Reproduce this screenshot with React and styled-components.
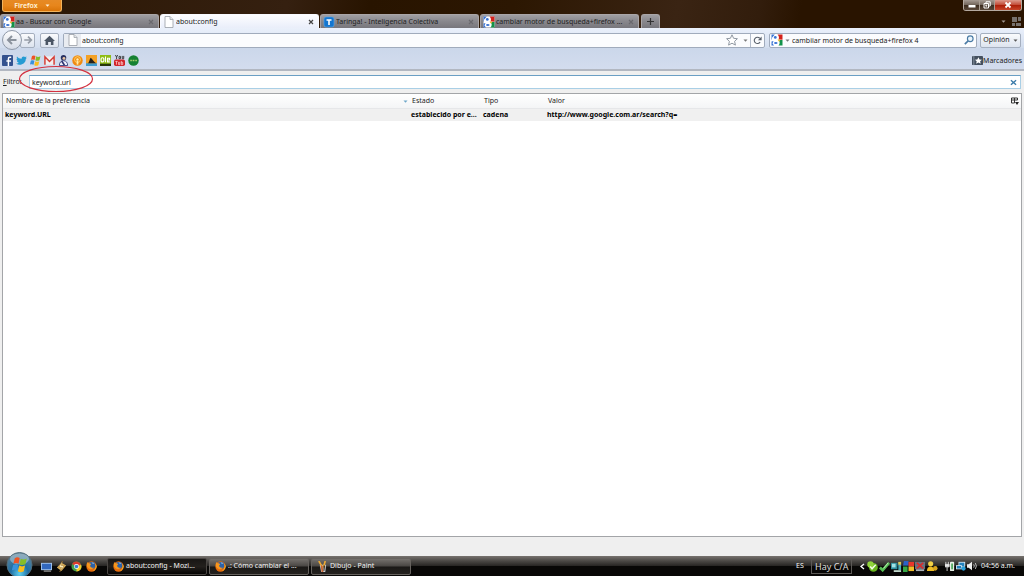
import React from 'react';
import styled, { createGlobalStyle, css } from 'styled-components';

const Global = createGlobalStyle`
  * { box-sizing: border-box; }
  body { margin: 0; font: 7px/10px "Noto Sans", "Open Sans", sans-serif; color: #222; }
  button, input { font: inherit; color: inherit; margin: 0; padding: 0; border: 0; background: none; }
  input { outline: 0; }
  svg { display: block; flex: none; }
`;

const Desktop = styled.div`
  min-height: 100vh;
  display: flex;
  flex-direction: column;
  background: #efefef;
`;

/* ---------- window frame ---------- */
const Frame = styled.header`
  background: linear-gradient(100deg, #2b1704 0%, #352010 28%, #281400 36%, #2c1702 50%, #3a2413 66%, #321d0c 74%, #291400 78%, #291400 100%);
`;
const TitleBar = styled.div`
  height: 14px;
  padding: 0 2px;
  display: flex;
  justify-content: space-between;
  align-items: flex-start;
`;
const FirefoxButton = styled.button`
  width: 60px;
  height: 12px;
  display: flex;
  align-items: center;
  justify-content: center;
  gap: 7px;
  color: #fff4dc;
  font-weight: 600;
  background: linear-gradient(#e68a25, #e7861c 50%, #d97408);
  border: 1px solid #f3b45c;
  border-top: 0;
  border-radius: 0 0 3px 3px;
`;
const WindowControls = styled.div`
  display: flex;
  height: 11px;
  border: 1px solid #b5aaa1;
  border-top: 0;
  border-radius: 0 0 3px 3px;
  overflow: hidden;
`;
const ControlButton = styled.button`
  width: ${(p) => (p.$close ? 27 : 15)}px;
  display: flex;
  align-items: center;
  justify-content: center;
  border-left: ${(p) => (p.$first ? 0 : 1)}px solid #a89d93;
  background: ${(p) => (p.$close
    ? 'linear-gradient(#dc9a8c, #c4503c 45%, #a91c06 50%, #c8452a)'
    : 'linear-gradient(#a59a92, #75695f 45%, #3a2a1d 50%, #5a493b)')};
`;
const TabStrip = styled.nav`
  height: 14px;
  display: flex;
`;
const tabLook = css`
  background: ${(p) => (p.$active ? 'linear-gradient(#fdfdff, #e9eefa)' : 'linear-gradient(#a09fa3, #8a898e 45%, #77767c)')};
  border: 1px solid ${(p) => (p.$active ? '#f8faff' : '#aaa6a8')};
  border-bottom: 0;
  border-radius: 3px 3px 0 0;
`;
const Tab = styled.div`
  ${tabLook}
  flex: 0 1 159px;
  min-width: 0;
  margin-right: 1px;
  padding: 0 4px 0 2px;
  display: flex;
  align-items: center;
  gap: 1px;
`;
const TabTitle = styled.button`
  flex: 1;
  min-width: 0;
  text-align: left;
  white-space: nowrap;
  overflow: hidden;
  text-overflow: ellipsis;
`;
const PlainButton = styled.button`
  display: flex;
  align-items: center;
  justify-content: center;
`;
const NewTab = styled.button`
  ${tabLook}
  width: 19px;
  margin-left: 1px;
  display: flex;
  align-items: center;
  justify-content: center;
`;
const StripTools = styled.div`
  margin-left: auto;
  padding-right: 3px;
  display: flex;
  align-items: center;
  gap: 6px;
`;

/* ---------- toolbars ---------- */
const NavBar = styled.div`
  height: 20px;
  padding: 4px 3px 0 2px;
  display: flex;
  align-items: center;
  background: linear-gradient(#eaf0fb, #d2ddee);
`;
const BackButton = styled.button`
  width: 20px;
  height: 20px;
  flex: none;
  display: flex;
  align-items: center;
  justify-content: center;
  border: 1px solid #8f99a8;
  border-radius: 50%;
  background: linear-gradient(#fdfdfe, #d6dce7);
  z-index: 1;
`;
const ToolButton = styled.button`
  width: ${(p) => p.$width}px;
  height: 15px;
  margin-left: ${(p) => p.$gap}px;
  flex: none;
  display: flex;
  align-items: center;
  justify-content: center;
  gap: 3px;
  border: 1px solid #a5afbf;
  border-radius: 2px;
  background: linear-gradient(#fafbfd, #dde4ef);
`;
const Field = styled.div`
  height: 15px;
  min-width: 0;
  margin-left: ${(p) => p.$gap}px;
  flex: ${(p) => (p.$width ? `0 1 ${p.$width}px` : '1')};
  display: flex;
  align-items: center;
  border: 1px solid #a0abbc;
  border-radius: 2px;
  background: #fbfcfe;
  input { flex: 1; min-width: 0; height: 11px; padding-left: 1px; }
`;
const PageBox = styled.span`
  width: 17px;
  align-self: stretch;
  display: flex;
  align-items: center;
  justify-content: center;
  background: #e9ecf1;
`;
const ReloadButton = styled.button`
  width: 14px;
  align-self: stretch;
  display: flex;
  align-items: center;
  justify-content: center;
  border-left: 1px solid #b3bccb;
`;
const FieldIcon = styled.button`
  width: ${(p) => p.$width}px;
  display: flex;
  align-items: center;
  justify-content: center;
  gap: 2px;
`;
const Bookmarks = styled.div`
  height: 23px;
  padding: 4px 2px 0;
  display: flex;
  align-items: center;
  background: linear-gradient(#cbd7ea, #d3dcee);
  border-bottom: 2px solid #b2b7c1;
`;
const Bookmark = styled.a`
  width: 14px;
  flex: none;
  color: inherit;
  text-decoration: none;
`;
const BookmarksMenu = styled.button`
  margin-left: auto;
  display: flex;
  align-items: center;
`;

/* ---------- page ---------- */
const FilterBar = styled.div`
  position: relative;
  height: 22px;
  padding: 0 3px;
  display: flex;
  align-items: center;
`;
const FilterLabel = styled.label`
  width: 26px;
  flex: none;
`;
const FilterField = styled.div`
  flex: 1;
  height: 14px;
  display: flex;
  align-items: center;
  padding: 0 3px 0 2px;
  background: #fff;
  border: 1px solid #a9cfe6;
  border-top-color: #6b9fc4;
  input { flex: 1; min-width: 0; height: 12px; }
`;
const Marker = styled.svg`
  position: absolute;
  left: 18px;
  top: -6px;
  pointer-events: none;
`;
const Tree = styled.main`
  flex: 1;
  margin: 0 2px 19px;
  background: #fff;
  border: 1px solid #a3a5a8;
`;
const PrefTable = styled.table`
  width: 100%;
  table-layout: fixed;
  border-collapse: collapse;
  th, td { padding: 1px 0 0 3px; text-align: left; white-space: nowrap; overflow: hidden; text-overflow: ellipsis; }
  th { height: 14px; font-weight: 400; background: linear-gradient(#fff, #f4f5f6); border-bottom: 1px solid #e6e7e9; }
  td { height: 13px; padding-left: 2px; font-weight: 700; color: #000; background: #f0f0f0; }
`;
const Col = styled.col`
  width: ${(p) => (p.$width ? `${p.$width}px` : 'auto')};
`;
const HeadCell = styled.div`
  display: flex;
  align-items: center;
  justify-content: space-between;
  padding-right: 1px;
`;

/* ---------- taskbar ---------- */
const Taskbar = styled.footer`
  height: 20px;
  padding: 0 9px 0 6px;
  display: flex;
  align-items: center;
  color: #f2f2f2;
  background: linear-gradient(#77736f 0, #4b4845 25%, #292725 48%, #080706 52%, #080706 100%);
`;
const StartButton = styled.button`
  width: 28px;
  height: 24px;
  align-self: flex-end;
  flex: none;
`;
const QuickLaunch = styled.div`
  width: 73px;
  padding-left: 7px;
  flex: none;
  display: flex;
  gap: 4px;
`;
const Task = styled.button`
  flex: 0 1 100px;
  min-width: 0;
  height: 17px;
  margin-right: 2px;
  padding: 0 5px;
  display: flex;
  align-items: center;
  gap: 2px;
  white-space: nowrap;
  border: 1px solid ${(p) => (p.$active ? '#4a4643' : '#66625e')};
  border-radius: 2px;
  background: ${(p) => (p.$active
    ? 'linear-gradient(#181614, #23201d 50%, #050403)'
    : 'linear-gradient(#75716d, #494643 48%, #1a1816 52%, #25221f)')};
`;
const Tray = styled.div`
  margin-left: auto;
  display: flex;
  align-items: center;
`;
const Language = styled.span`
  width: 15px;
`;
const Power = styled.span`
  width: 41px;
  height: 15px;
  padding-left: 3px;
  font-size: 9px;
  line-height: 14px;
  white-space: nowrap;
  border: 1px solid #5c5956;
  color: #ddd;
`;
const TrayIcons = styled.div`
  margin-left: ${(p) => p.$gap}px;
  display: flex;
  gap: 1px;
`;
const Clock = styled.time`
  width: 34px;
  margin-left: 4px;
  white-space: nowrap;
`;

/* ---------- drawings ---------- */
const Svg = ({ s = 10, box = 12, children, ...rest }) => (
  <svg width={s} height={s} viewBox={`0 0 ${box} ${box}`} aria-hidden="true" {...rest}>{children}</svg>
);
const Arrow = ({ color = '#555' }) => (
  <svg width="5" height="3" viewBox="0 0 5 3" aria-hidden="true"><path d="M.5.5h4L2.500 2.700z" fill={color} /></svg>
);
const GoogleIcon = () => (
  <Svg s={12}>
    <rect x=".5" y=".5" width="11" height="11" rx="1" fill="#fff" />
    <path d="M.5.500h3.300L1 3.800v1.700H.5z" fill="#3a74d4" />
    <path d="M6.500.5h5v5.300L7.500 5.500C8.300 4 8.200 2 6.500.5z" fill="#d3221c" />
    <path d="M7.500 6h4v5.500h-4c1.600-1.500 1.600-3.700 0-5.500z" fill="#12924a" />
    <path d="M.5 7.500L2.500 7 1.500 9.500 3 11.500H.5z" fill="#3a74d4" />
    <circle cx="4.300" cy="3.400" r="1.400" fill="#3a74d4" />
    <ellipse cx="4.800" cy="9" rx="1.800" ry="1.100" fill="#3a74d4" />
    <path d="M6.500 5.500l3 .2-1.500 2z" fill="#f0c030" />
  </Svg>
);
const PageIcon = () => (
  <Svg s={12}><path d="M2 .5h5l3 3v8H2z" fill="#fff" stroke="#979ca3" strokeWidth=".8" /><path d="M7 .5v3h3" fill="#e4e6e9" stroke="#979ca3" strokeWidth=".7" /></Svg>
);
const TaringaIcon = () => (
  <Svg s={12}><rect x="1" y="1" width="10" height="10" rx="2" fill="#1476cf" stroke="#5aa9eb" strokeWidth=".6" /><path d="M3.500 4h5M6 4v5" stroke="#fff" strokeWidth="1.600" /></Svg>
);
const CloseIcon = ({ color }) => (
  <Svg s={6} box={6}><path d="M1 1l4 4M5 1L1 5" stroke={color} strokeWidth="1.200" /></Svg>
);
const FirefoxIcon = () => (
  <Svg s={11}>
    <circle cx="6" cy="6" r="5.600" fill="#e56b0b" /><circle cx="6.300" cy="5" r="3.800" fill="#2d62a8" />
    <path d="M6 1.400c2 0 3 1 3.500 2-1-.4-1.500-.3-2-.2z" fill="#86bce6" />
    <path d="M.8 3l1.100-2 .9 1.500c1.500-.2 2.200.4 2.800 1L4.500 5c0 2 2 3 4 2-.5 1.500-3 2.500-5 1.500C1 7.500.5 5 .8 3z" fill="#f7961d" />
    <path d="M10 3c1.500 3 .3 6.500-2.500 7.800 2-.2 4-2 4.100-4.800C11.600 5 11 3.800 10 3z" fill="#fbc12d" />
  </Svg>
);
const Flag = ({ x = 0, y = 0, k = 1 }) => (
  <g transform={`translate(${x} ${y}) scale(${k})`}>
    <path d="M2.500 1.500c1.300-.9 2.300-.7 3.300-.1L5 5.200c-1-.6-2-.7-3.400 0z" fill="#ef5323" />
    <path d="M6.500 1.800c1.200.7 2.500.7 4-.1l-.9 3.800c-1.400.7-2.700.8-3.900 0z" fill="#86bd26" />
    <path d="M1.400 6c1.300-.7 2.400-.6 3.400 0L4 9.700c-1-.6-2-.7-3.500 0z" fill="#3a92db" />
    <path d="M5.500 6.400c1.200.7 2.500.7 3.900 0l-.9 3.800c-1.400.8-2.700.8-3.900 0z" fill="#fbbd1c" />
  </g>
);

const bookmarks = [
  ['Facebook', <><rect width="12" height="12" rx="1" fill="#34528f" /><path d="M10 2.500H8.500Q7 2.500 7 4v8M4.800 6.500h5" stroke="#fff" strokeWidth="1.600" fill="none" /></>],
  ['Twitter', <path d="M0 9.300c2 0 2.500-.4 3-.9C1.600 8 1.300 7.400 1 6.600h1.200C.8 6 .6 5 .6 4l1 .4C.7 3.500.7 2.500 1.100 1.600c1.300 1.600 2.900 2.300 5 2.500C6 1.600 8.500.9 9.900 2.300l1.700-.6-1 1.500 1.300-.3-1.200 1.400C10.600 9.700 4.500 12.300 0 9.300z" fill="#259bd3" />],
  ['Windows', <Flag x={-0.7} y={-0.6} k={1.15} />],
  ['Gmail', <><rect y="1.500" width="12" height="9" fill="#f4eeee" /><path d="M1 10.500V2l5 5 5-5v8.500" fill="none" stroke="#d33a34" strokeWidth="1.600" /></>],
  ['Perfil', <><circle cx="6" cy="3" r="3" fill="#273061" /><circle cx="6.500" cy="3.700" r="1.600" fill="#e9c4a2" /><path d="M1.500 11.500c0-3 1.500-5.300 4.500-5.300s4.500 2.300 4.500 5.300z" fill="#eff1fa" stroke="#353e7c" /><path d="M4 6.500l3 4.500" stroke="#2c3170" strokeWidth="1.800" /></>],
  ['Podcast', <><circle cx="6" cy="6" r="5.700" fill="#f08a12" /><circle cx="6" cy="5" r="3.200" fill="none" stroke="#ffd467" /><circle cx="6" cy="4.800" r="1.300" fill="#ffeeb0" /><path d="M6 6v4.500" stroke="#ffe9a7" strokeWidth="1.800" /></>],
  ['Fotos', <><rect width="12" height="12" fill="#f3a126" /><path d="M0 9h12v3H0z" fill="#3e9bd0" /><path d="M2 9c2-1 1.500-4 3-6 2 1 3 4 6 6z" fill="#26201a" /></>],
  ['Olé', <><rect width="12" height="12" fill="#8fbd13" /><path d="M0 9.500h12V12H0z" fill="#27370a" /><rect x="1.200" y="3" width="3" height="4.500" rx="1.300" fill="none" stroke="#fff" strokeWidth="1.300" /><path d="M6 1.500v6.500M8 5.500h2.500V3.500H8.200v4h2.500" fill="none" stroke="#fff" strokeWidth="1.200" /></>],
  ['YouTube', <><path d="M1.500 0l1.300 2.300L4 0M2.800 2.300v2.200" stroke="#333" fill="none" /><path d="M5.500 1.500h1.600v2.500H5.500zM9 1v3h1.600V1" stroke="#333" fill="none" /><rect y="5" width="12" height="7" rx="1.800" fill="#d3252a" /><path d="M1.500 7h2.500M2.700 7v3.500M5 7.500v3h1.300v-3M8 6.500v4h1.500V8H8" stroke="#ffd5d5" fill="none" strokeWidth=".8" /></>],
  ['Enlace verde', <><circle cx="6" cy="6" r="5.700" fill="#168132" /><path d="M2.500 6h1.700M5 6h2M8 6h1.700" stroke="#a9cf6a" strokeWidth="1.800" /></>],
];

const tabs = [
  { title: 'aa - Buscar con Google', icon: <GoogleIcon /> },
  { title: 'about:config', icon: <PageIcon />, active: true },
  { title: 'Taringa! - Inteligencia Colectiva', icon: <TaringaIcon /> },
  { title: 'cambiar motor de busqueda+firefox ...', icon: <GoogleIcon /> },
];

const trayIcons = [
  <><circle cx="7" cy="7" r="4.800" fill="#68b51e" /><circle cx="3.800" cy="3.800" r="3.500" fill="#91d43b" /><path d="M3.500 6l2 2.500 4-4.500" stroke="#f5ffe6" fill="none" strokeWidth="1.600" /></>,
  <><path d="M1 7l3 3 7-8" stroke="#57bd55" strokeWidth="3" fill="none" /><path d="M5 8l5-6" stroke="#c5f2bc" /></>,
  <><rect y="2" width="7" height="7" fill="#2d8d9d" /><rect x="1" y="3" width="4" height="4" fill="#a4e1e4" /><path d="M8 1h3v9H8z" fill="#4dacb4" /><path d="M3 10h8v2H3z" fill="#bfd6cb" /><path d="M8 1h3v3H8z" fill="#e8c94d" /></>,
  <><path d="M1 0h5v5H0z" fill="#2b62c7" /><path d="M6 1h6v5H6z" fill="#e8372b" /><path d="M0 6h5v6H0z" fill="#35a845" /><path d="M6 6h6v5H6z" fill="#f0bd28" /></>,
  <><rect y="1" width="11" height="8" fill="#69717e" /><path d="M1 10h9" stroke="#aab0b8" strokeWidth="2" /><path d="M2 2l7 6M9 2L2 8" stroke="#d62d2d" strokeWidth="2" /></>,
  <><circle cx="4" cy="3" r="2.800" fill="#f2d145" /><path d="M0 11c0-4 2-5 4-5s4 2 4 5z" fill="#eebd25" /><circle cx="9" cy="8" r="2.500" fill="#d7a41d" /></>,
];
const systemIcons = [
  <><rect x="6" y="1" width="5" height="11" rx="1" fill="#e7efe6" /><rect x="7.500" y="3" width="2" height="7" fill="#4aa65a" /><path d="M1 1v3M4 1v3M0 4h5v3H0zM2.500 7v5" stroke="#e8e8e8" fill="#e8e8e8" /></>,
  <><rect x="3" y="1" width="8" height="6" fill="#dceaf3" /><rect x="4" y="2" width="6" height="4" fill="#2582bd" /><rect y="5" width="7" height="5" fill="#d5e7f1" /><rect x="1" y="6" width="5" height="3" fill="#247db7" /><circle cx="9" cy="9" r="2.600" fill="#2aa0db" /></>,
  <><path d="M0 4h2l4-3v10L2 8H0z" fill="#eee" /><path d="M8 4q1.500 2 0 4M10 2.500q2.500 3.500 0 7" fill="none" stroke="#ddd" /></>,
];

export default function App() {
  return (
    <Desktop>
      <Global />
      <Frame>
        <TitleBar>
          <FirefoxButton>Firefox <Arrow color="#fff4dc" /></FirefoxButton>
          <WindowControls>
            <ControlButton $first aria-label="Minimizar"><Svg s={8} box={8}><rect x="0.500" y="4" width="7" height="2.500" fill="#fff" /></Svg></ControlButton>
            <ControlButton aria-label="Restaurar"><Svg s={8} box={8}><path d="M3 2V.8h4.200V5H6M1 2.500h4.500V7H1zM2.800 4.200h1v1h-1z" fill="none" stroke="#fff" /></Svg></ControlButton>
            <ControlButton $close aria-label="Cerrar"><Svg s={8} box={8}><path d="M1.500 1.500l5 5M6.500 1.500l-5 5" stroke="#fff" strokeWidth="1.800" /></Svg></ControlButton>
          </WindowControls>
        </TitleBar>
        <TabStrip aria-label="Pestañas">
          {tabs.map((t) => (
            <Tab key={t.title} $active={t.active}>
              {t.icon}
              <TabTitle>{t.title}</TabTitle>
              <PlainButton aria-label="Cerrar pestaña"><CloseIcon color={t.active ? '#444' : '#6a696e'} /></PlainButton>
            </Tab>
          ))}
          <NewTab aria-label="Nueva pestaña"><Svg s={7} box={7}><path d="M3.500 0v7M0 3.500h7" stroke="#333" strokeWidth="1.200" /></Svg></NewTab>
          <StripTools>
            <PlainButton aria-label="Listar pestañas"><Arrow color="#a39a93" /></PlainButton>
            <PlainButton aria-label="Agrupar pestañas">
              <Svg s={9} box={9}><path d="M0 0h5v5H0zM6 0h3v4H6zM0 6h3v3H0zM4 6h5v3H4z" fill="#77716d" /></Svg>
            </PlainButton>
          </StripTools>
        </TabStrip>
      </Frame>

      <NavBar>
        <BackButton aria-label="Atrás"><Svg s={12}><path d="M6 2L2 6l4 4M2.500 6h8" fill="none" stroke="#8b929c" strokeWidth="2" /></Svg></BackButton>
        <ToolButton $width={15} $gap={-2} aria-label="Adelante"><Svg s={10}><path d="M6 2l4 4-4 4M9.500 6h-8" fill="none" stroke="#959ca7" strokeWidth="2" /></Svg></ToolButton>
        <ToolButton $width={19} $gap={5} aria-label="Inicio"><Svg s={11}><path d="M0 6.500L6 .8l6 5.700h-1.700V11H7.500V7.500h-3V11H1.700V6.500z" fill="#4a5564" /></Svg></ToolButton>
        <Field $gap={4}>
          <PageBox><PageIcon /></PageBox>
          <input aria-label="Dirección" defaultValue="about:config" />
          <FieldIcon $width={19} aria-label="Añadir a marcadores"><Svg s={12}><path d="M6 .8l1.600 3.500 3.800.4-2.800 2.600.8 3.800L6 9.200l-3.400 1.900.8-3.800L.6 4.700l3.800-.4z" fill="#fff" stroke="#858d98" strokeWidth=".9" /></Svg></FieldIcon>
          <FieldIcon $width={9} aria-label="Historial"><Arrow color="#777" /></FieldIcon>
          <ReloadButton aria-label="Recargar"><Svg s={9}><path d="M9.500 8A4.200 4.200 0 1 1 9 3" fill="none" stroke="#59616c" strokeWidth="1.500" /><path d="M11.500.5v5h-5z" fill="#59616c" /></Svg></ReloadButton>
        </Field>
        <Field $gap={4} $width={208}>
          <FieldIcon $width={21} aria-label="Motor de búsqueda"><GoogleIcon /><Arrow color="#777" /></FieldIcon>
          <input aria-label="Buscar" defaultValue="cambiiar motor de busqueda+firefox 4" />
          <FieldIcon $width={14} aria-label="Buscar"><Svg s={10}><circle cx="7.500" cy="4.500" r="3.400" fill="#e8f3fb" stroke="#4a7ba5" strokeWidth="1.400" /><path d="M5 7L1 11" stroke="#4a7ba5" strokeWidth="2" /></Svg></FieldIcon>
        </Field>
        <ToolButton $width={41} $gap={3}>Opinión <Arrow /></ToolButton>
      </NavBar>
      <Bookmarks>
        {bookmarks.map(([name, art]) => (
          <Bookmark key={name} href="#" aria-label={name}><Svg s={11}>{art}</Svg></Bookmark>
        ))}
        <BookmarksMenu>
          <Svg s={11}><rect y="1" width="12" height="10" rx="1" fill="#44505f" /><path d="M2 1v10" stroke="#8a95a2" /><path d="M7 2.500l1.200 2.300 2.600.3-1.900 1.800.5 2.600L7 8.200 4.600 9.500l.5-2.600-1.900-1.800 2.600-.3z" fill="#fff" /></Svg>
          Marcadores
        </BookmarksMenu>
      </Bookmarks>

      <FilterBar>
        <FilterLabel htmlFor="filter"><u>F</u>iltro:</FilterLabel>
        <FilterField>
          <input id="filter" defaultValue="keyword.url" />
          <PlainButton aria-label="Borrar filtro"><Svg s={7} box={6}><path d="M.8 1l4.400 4M5.200 1L.8 5" stroke="#3a7ba9" strokeWidth="1.200" /></Svg></PlainButton>
        </FilterField>
        <Marker width="76" height="28" viewBox="0 0 76 28" aria-hidden="true">
          <ellipse cx="38" cy="14" rx="36.500" ry="12.500" fill="none" stroke="#d3303f" strokeWidth="1.200" />
        </Marker>
      </FilterBar>

      <Tree>
        <PrefTable>
          <colgroup><Col $width={406} /><Col $width={72} /><Col $width={64} /><Col /><Col $width={13} /></colgroup>
          <thead>
            <tr>
              <th><HeadCell>Nombre de la preferencia <Arrow color="#6ea7c9" /></HeadCell></th>
              <th>Estado</th>
              <th>Tipo</th>
              <th>Valor</th>
              <th><PlainButton aria-label="Columnas"><Svg s={8} box={8}><path d="M.5 1h6M.5 1v5h3M.5 3h6M3.500 1v5M6.500 1v2" fill="none" stroke="#333" /><path d="M4 5h4L6 8z" fill="#222" /></Svg></PlainButton></th>
            </tr>
          </thead>
          <tbody>
            <tr>
              <td>keyword.URL</td>
              <td>establecido por e...</td>
              <td>cadena</td>
              <td>http://www.google.com.ar/search?q=</td>
              <td />
            </tr>
          </tbody>
        </PrefTable>
      </Tree>

      <Taskbar>
        <StartButton aria-label="Inicio">
          <svg width="28" height="24" viewBox="0 0 28 24" aria-hidden="true">
            <defs>
              <radialGradient id="orb" cx=".5" cy=".85" r=".8"><stop offset="0" stopColor="#5fd0ee" /><stop offset=".45" stopColor="#1e6fa5" /><stop offset="1" stopColor="#5f8195" /></radialGradient>
            </defs>
            <circle cx="13.500" cy="13" r="12.500" fill="url(#orb)" stroke="#526e7c" />
            <ellipse cx="13.500" cy="7" rx="9.500" ry="5.500" fill="#cfe2ea" opacity=".45" />
            <Flag x={5} y={4} k={1.5} />
          </svg>
        </StartButton>
        <QuickLaunch>
          <PlainButton aria-label="Mostrar escritorio"><Svg s={11}><rect y="2" width="12" height="8" fill="#a4c6ec" /><rect x="1" y="3" width="10" height="6" fill="#3268bd" /><path d="M3 11h8" stroke="#ccc" /></Svg></PlainButton>
          <PlainButton aria-label="Winamp"><Svg s={11}><path d="M1 7l5-5 5 3-5 6z" fill="#e0b35a" /><path d="M7 0L3 7h3l-2 5 5-7H6z" fill="#fff1bd" stroke="#8c611d" strokeWidth=".5" /></Svg></PlainButton>
          <PlainButton aria-label="Chrome"><Svg s={11}><circle cx="6" cy="6" r="5.500" fill="#43a047" /><path d="M6 6L1.200 3.300A5.500 5.500 0 0 1 11 4z" fill="#dc3b2d" /><path d="M6 6l5-2a5.500 5.500 0 0 1-5 7.500z" fill="#f5c92e" /><circle cx="6" cy="6" r="2.700" fill="#fff" /><circle cx="6" cy="6" r="2" fill="#397fd4" /></Svg></PlainButton>
          <PlainButton aria-label="Firefox"><FirefoxIcon /></PlainButton>
        </QuickLaunch>
        <Task $active><FirefoxIcon />about:config - Mozi...</Task>
        <Task><FirefoxIcon />.: Cómo cambiar el ...</Task>
        <Task>
          <Svg s={11}><path d="M3 4h7l-1 8H4.500z" fill="#c8d1d6" /><path d="M2 0l4 7M9 0L7 7" stroke="#edaa33" strokeWidth="1.800" /><path d="M4 5h2l1 7H5z" fill="#c8632f" /><path d="M7 5h2l-1 6H7z" fill="#4e3826" /></Svg>
          Dibujo - Paint
        </Task>
        <Tray>
          <Language>ES</Language>
          <Power>Hay C/A</Power>
          <TrayIcons $gap={7}><PlainButton aria-label="Mostrar iconos ocultos"><Svg s={7} box={7}><path d="M5 1L2 3.500 5 6" fill="none" stroke="#fff" strokeWidth="1.300" /></Svg></PlainButton></TrayIcons>
          <TrayIcons $gap={1}>{trayIcons.map((art, i) => <Svg key={i} s={11}>{art}</Svg>)}</TrayIcons>
          <TrayIcons $gap={7}>{systemIcons.map((art, i) => <Svg key={i} s={10}>{art}</Svg>)}</TrayIcons>
          <Clock>04:56 a.m.</Clock>
        </Tray>
      </Taskbar>
    </Desktop>
  );
}
